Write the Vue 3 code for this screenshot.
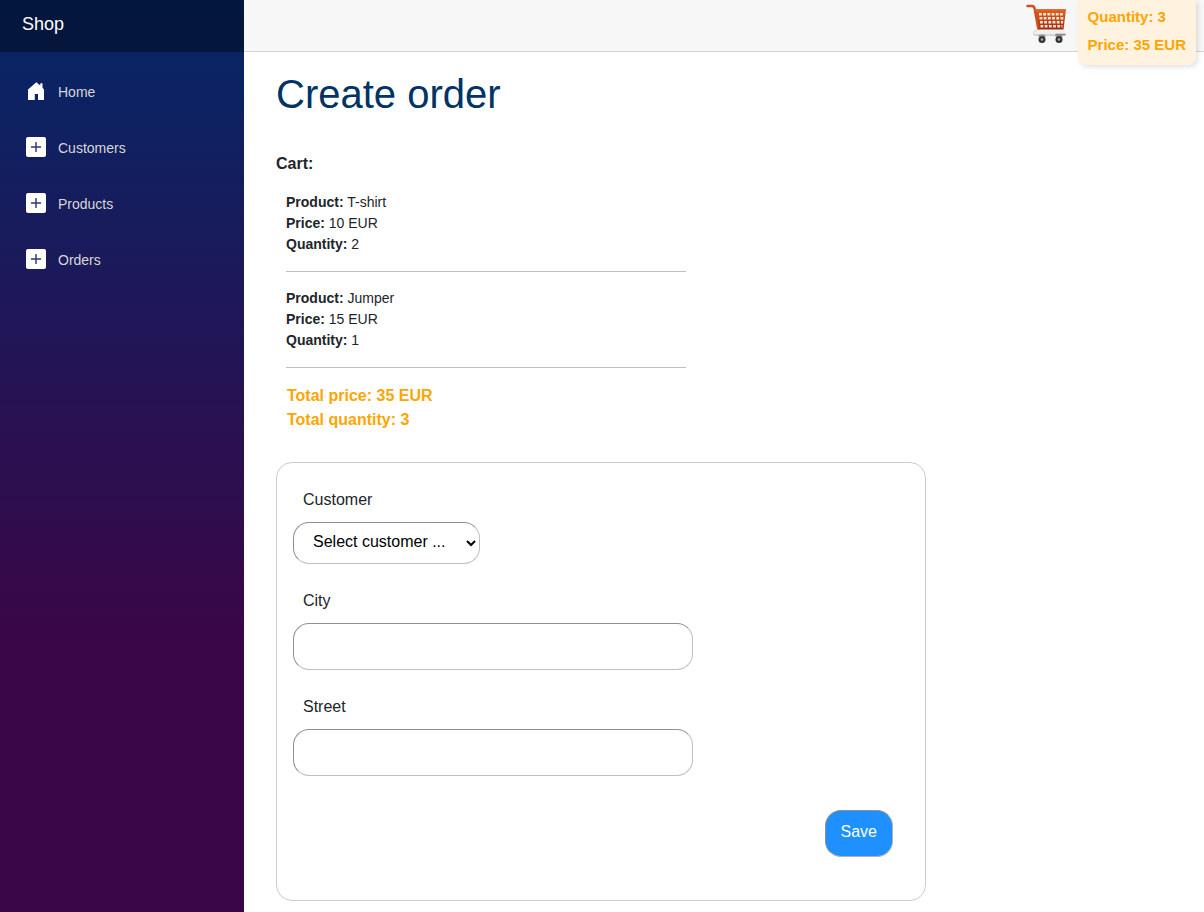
<script setup>
import { ref } from 'vue'

const sections = ['Customers', 'Products', 'Orders']
const cart = [
  { product: 'T-shirt', price: 10, quantity: 2 },
  { product: 'Jumper', price: 15, quantity: 1 },
]
const totalPrice = cart.reduce((sum, i) => sum + i.price * i.quantity, 0)
const totalQuantity = cart.reduce((sum, i) => sum + i.quantity, 0)

const customer = ref('')
const city = ref('')
const street = ref('')
</script>

<template>
  <div class="page">
    <aside class="sidebar">
      <div class="brand-row"><a class="brand" href="#">Shop</a></div>
      <nav class="nav">
        <a class="nav-link" href="#">
          <svg class="icon" viewBox="0 0 20 20" aria-hidden="true">
            <path fill="#fff" d="M10.300 1.200 14.300 4.600V2.300h2.200v4.400l1.500 1.900V18.900H12V13H8.800v5.900H2V8.600Z" />
          </svg>
          Home
        </a>
        <a v-for="name in sections" :key="name" class="nav-link" href="#">
          <svg class="icon" viewBox="0 0 20 20" aria-hidden="true">
            <rect width="20" height="20" rx="2" fill="#fff" />
            <path d="M10 5v10M5 10h10" stroke="#30366f" stroke-width="1.400" />
          </svg>
          {{ name }}
        </a>
      </nav>
    </aside>

    <div class="content">
      <header class="topbar">
        <svg class="cart-icon" viewBox="0 0 42 42" role="img" aria-label="Cart">
          <defs>
            <linearGradient id="basket" x1="0" y1="0" x2="0" y2="1">
              <stop offset="0" stop-color="#df6420" />
              <stop offset="1" stop-color="#a22a0b" />
            </linearGradient>
          </defs>
          <path d="M10.500 28.500C7.500 29.500 7 33 10 33h29" fill="none" stroke="#c4c4c4" stroke-width="1.300" stroke-linecap="round" />
          <path d="M9.500 30.800h30" stroke="#f0f0f0" stroke-width="3" stroke-linecap="round" />
          <path d="M12.500 34.500q3.500-2.500 7 0M29.500 34.500q3.500-2.500 7 0" fill="none" stroke="#999" stroke-width="2" />
          <path d="M30 32.500h9" stroke="#888" stroke-width="1.500" stroke-linecap="round" />
          <path d="M8.500 7.500H40L37.500 27.500H12Z" fill="url(#basket)" />
          <path d="M1.500 4H6q2 0 2.600 2.500l3.700 20" fill="none" stroke="#cf4e1b" stroke-width="2.400" stroke-linecap="round" />
          <path d="M9 8h31" stroke="#e0672a" stroke-width="1.800" />
          <path d="M13 12.200h25M13.500 16.200h24M14 20.200h23M14.500 24.200h22" stroke="#fae5da" stroke-width="2.600" stroke-dasharray="2.800 1.400" />
          <circle cx="16" cy="37.500" r="3.500" fill="#343434" />
          <circle cx="33" cy="37.500" r="3.500" fill="#343434" />
          <circle cx="16" cy="37.500" r="1.300" fill="#aaa" />
          <circle cx="33" cy="37.500" r="1.300" fill="#aaa" />
        </svg>
        <div class="cart-summary">
          <div>Quantity: {{ totalQuantity }}</div>
          <div>Price: {{ totalPrice }} EUR</div>
        </div>
      </header>

      <main class="main">
        <h1>Create order</h1>
        <h2>Cart:</h2>
        <section class="cart">
          <div v-for="item in cart" :key="item.product" class="cart-item">
            <div><b>Product:</b> {{ item.product }}</div>
            <div><b>Price:</b> {{ item.price }} EUR</div>
            <div><b>Quantity:</b> {{ item.quantity }}</div>
          </div>
          <div class="totals">
            <div>Total price: {{ totalPrice }} EUR</div>
            <div>Total quantity: {{ totalQuantity }}</div>
          </div>
        </section>

        <form class="card" @submit.prevent>
          <div class="field">
            <label for="customer">Customer</label>
            <select id="customer" v-model="customer">
              <option value="">Select customer ...</option>
            </select>
          </div>
          <div class="field">
            <label for="city">City</label>
            <input id="city" v-model="city" type="text" />
          </div>
          <div class="field">
            <label for="street">Street</label>
            <input id="street" v-model="street" type="text" />
          </div>
          <div class="actions"><button type="submit">Save</button></div>
        </form>
      </main>
    </div>
  </div>
</template>

<style>
body {
  margin: 0;
  background: #fff;
}
</style>

<style scoped>
.page {
  display: flex;
  min-height: 100vh;
  font: 16px/24px "Liberation Sans", Arial, sans-serif;
  color: #212529;
}
.page * {
  box-sizing: border-box;
}
.sidebar {
  flex: 0 0 244px;
  background: linear-gradient(180deg, #052767 0%, #3a0647 70%);
}
.brand-row {
  height: 52px;
  padding: 10px 22px;
  background: rgba(0, 0, 0, 0.4);
}
.brand {
  font-size: 18px;
  line-height: 28px;
  color: #fff;
  text-decoration: none;
}
.nav {
  display: flex;
  flex-direction: column;
  gap: 16px;
  padding: 20px 12px;
}
.nav-link {
  display: flex;
  align-items: center;
  gap: 12px;
  height: 40px;
  padding: 0 14px;
  font-size: 14px;
  color: #d7d7d7;
  text-decoration: none;
}
.icon {
  width: 20px;
  height: 20px;
  margin-bottom: 2px;
}
.content {
  flex: 1;
  min-width: 0;
}
.topbar {
  display: flex;
  justify-content: flex-end;
  align-items: flex-start;
  gap: 10px;
  height: 52px;
  padding-right: 8px;
  background: #f7f7f7;
  border-bottom: 1px solid #d6d5d5;
}
.cart-icon {
  width: 42px;
  height: 42px;
  margin-top: 2px;
}
.cart-summary {
  padding: 3px 10px 6px;
  font-size: 15px;
  line-height: 28px;
  font-weight: 700;
  color: orange;
  background: #fff3e0;
  border-radius: 0 0 8px 8px;
  box-shadow: 2px 2px 5px rgba(0, 0, 0, 0.12);
}
.main {
  padding: 18px 24px 11px 32px;
}
h1 {
  margin: 0;
  font-size: 40px;
  line-height: 48px;
  font-weight: 400;
  color: #003366;
}
h2 {
  margin: 34px 0 0;
  font-size: 16px;
  line-height: 24px;
}
.cart {
  max-width: 410px;
  padding: 16px 0 0 10px;
}
.cart-item {
  padding-bottom: 16px;
  margin-bottom: 16px;
  font-size: 14px;
  line-height: 21px;
  border-bottom: 1px solid #c0c0c0;
}
.totals {
  padding-left: 1px;
  font-weight: 700;
  color: orange;
}
.card {
  max-width: 650px;
  margin-top: 30px;
  padding: 25px 16px 43px;
  border: 1px solid #ccc;
  border-radius: 16px;
}
.field {
  display: flex;
  flex-direction: column;
  align-items: flex-start;
  gap: 10px;
  margin-bottom: 25px;
}
label {
  padding-left: 10px;
}
select,
input,
button {
  margin: 0;
  font: inherit;
  border: 1px solid;
  border-color: #8f8f8f #c0c0c0 #c0c0c0 #8f8f8f;
  border-radius: 16px;
}
select {
  width: 187px;
  height: 42px;
  padding: 0 5px 3px 15px;
  color: #000;
  background-color: #fff;
}
input {
  width: 100%;
  max-width: 400px;
  height: 47px;
  padding: 0 16px;
  background: #fff;
}
.actions {
  display: flex;
  justify-content: flex-end;
  padding: 9px 16px 0;
}
button {
  height: 47px;
  padding: 0 15px 4px;
  color: #fff;
  background: #1e90ff;
  border-color: #8f8f8f #b0b0b0 #b0b0b0 #8f8f8f;
}
</style>
